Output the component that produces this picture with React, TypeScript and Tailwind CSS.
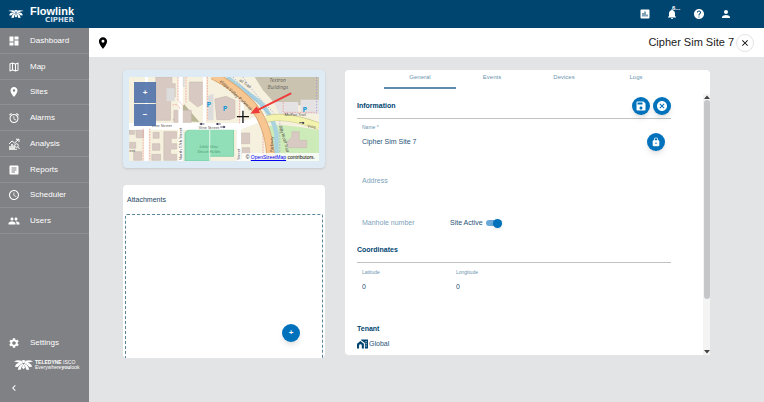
import type { ReactNode } from "react";
import {
  MdAlarm,
  MdArticle,
  MdAssessment,
  MdCancel,
  MdChevronLeft,
  MdClose,
  MdDashboard,
  MdHelp,
  MdLocationOn,
  MdLock,
  MdNotifications,
  MdOutlineMap,
  MdPeople,
  MdPerson,
  MdSave,
  MdSchedule,
  MdSettings,
} from "react-icons/md";

function TeledyneMark({ className }: { className: string }) {
  return (
    <svg viewBox="0 0 58 30" className={className} fill="currentColor" aria-hidden="true">
      <path d="M0 4 Q10 -1 22 2 L28 9 L22 11 Q12 5 0 4Z" />
      <path d="M58 4 Q48 -1 36 2 L30 9 L36 11 Q46 5 58 4Z" />
      <path d="M3 20 Q6 8 18 9 L26 11 Q16 14 11 21Z" />
      <path d="M55 20 Q52 8 40 9 L32 11 Q42 14 47 21Z" />
      <path d="M12 30 Q13 15 27 11 L28 14 Q21 20 21 29Z" />
      <path d="M46 30 Q45 15 31 11 L30 14 Q37 20 37 29Z" />
      <path d="M23 1 Q29 -1 35 1 L30 9 H28Z" />
      <path d="M29 12 L34 23 L29 28 L24 23Z" />
    </svg>
  );
}

function AnalysisIcon() {
  return (
    <svg viewBox="0 0 24 24" className="size-3" fill="none" stroke="currentColor" strokeWidth="2" aria-hidden="true">
      <path d="M2 12 L8 6 L13 10 L21 3 M16 2.500 H22 V8" />
      <path d="M4 22 V16 M8 22 V12 M12 22 V15" strokeWidth="3" />
      <circle cx="17" cy="15" r="3.500" />
      <path d="M19.500 18 L23 22 M2 22.500 H18" />
    </svg>
  );
}

function TenantIcon() {
  return (
    <svg viewBox="0 0 32 26" className="h-2.5 w-[11px] text-[#00456f]" fill="currentColor" aria-hidden="true">
      <path d="M0 12 L10 4 L20 12 V26 H14 V18 Q14 14 10 14 Q6 14 6 18 V26 H0Z" />
      <path d="M12 0 H32 V26 H23 V10 L12 2Z" />
      <path d="M25 5 h3 v3 h-3z M25 11 h3 v3 h-3z M25 17 h3 v3 h-3z" fill="#ffffff" />
    </svg>
  );
}

const navItems: { label: string; icon: ReactNode }[] = [
  { label: "Dashboard", icon: <MdDashboard className="size-3" /> },
  { label: "Map", icon: <MdOutlineMap className="size-3" /> },
  { label: "Sites", icon: <MdLocationOn className="size-3" /> },
  { label: "Alarms", icon: <MdAlarm className="size-3" /> },
  { label: "Analysis", icon: <AnalysisIcon /> },
  { label: "Reports", icon: <MdArticle className="size-3" /> },
  { label: "Scheduler", icon: <MdSchedule className="size-3" /> },
  { label: "Users", icon: <MdPeople className="size-3" /> },
];

function Header() {
  return (
    <header className="flex h-7 shrink-0 items-center justify-between bg-[#00456f] pr-8 pl-2 text-white">
      <div className="flex items-center gap-1.5">
        <TeledyneMark className="h-2 w-4" />
        <div className="flex flex-col items-end">
          <span className="text-[11px] leading-3 font-bold">Flowlink</span>
          <span className="font-['DejaVu_Sans',sans-serif] text-[7px] leading-[7px] font-bold text-[#cfdfe9]">CIPHER</span>
        </div>
      </div>
      <div className="flex items-center gap-[15px]">
        <button aria-label="Statistics">
          <MdAssessment className="size-3" />
        </button>
        <button aria-label="Notifications" className="relative">
          <MdNotifications className="size-3" />
          <span className="absolute -top-1 left-1.5 text-[6px] leading-2 font-bold">6...</span>
        </button>
        <button aria-label="Help">
          <MdHelp className="size-3" />
        </button>
        <button aria-label="Account">
          <MdPerson className="size-3" />
        </button>
      </div>
    </header>
  );
}

function Sidebar() {
  return (
    <nav className="flex w-[89px] shrink-0 flex-col bg-[#808184] text-[8px] text-white">
      <ul className="grid h-[206px] grid-rows-8">
        {navItems.map((item) => (
          <li key={item.label} className="flex border-b border-[#8f9093]">
            <a href="#" className="flex flex-1 items-center gap-2.5 pt-px pl-2">
              {item.icon}
              {item.label}
            </a>
          </li>
        ))}
      </ul>
      <a href="#" className="mt-auto flex h-[26px] items-center gap-2.5 pl-2">
        <MdSettings className="size-3" />
        Settings
      </a>
      <div className="flex h-[18px] items-center gap-0.5 pl-3.5">
        <TeledyneMark className="h-2.5 w-[19px]" />
        <div className="flex flex-col text-[5px] leading-[5px]">
          <span>
            <b>TELEDYNE</b> ISCO
          </span>
          <span>
            Everywhere<b>you</b>look
          </span>
        </div>
      </div>
      <button aria-label="Collapse menu" className="flex h-7 items-center pl-2">
        <MdChevronLeft className="size-3" />
      </button>
    </nav>
  );
}

function MapDrawing() {
  return (
    <svg viewBox="0 0 567 252" preserveAspectRatio="none" className="size-full" aria-hidden="true">
      <rect width="567" height="252" fill="#f5f1de" />
      {/* parkland and open ground */}
      <path d="M375 0 H567 V85 H440 L400 40Z" fill="#c9c3b0" />
      <path d="M395 160 Q410 130 567 160 V252 H430Z" fill="#cdebb8" />
      <path d="M130 130 L165 82 L210 135Z" fill="#b8b896" />
      <path d="M432 75 H505 V115 H450Z M512 68 H567 V110 H512Z" fill="#e4e2e2" />
      {/* buildings */}
      <g fill="#d8cac3" stroke="#c4b5ad" strokeWidth="1.500">
        <path d="M80 0 H128 V20 H138 V60 H124 V130 H80Z" />
        <path d="M180 15 H222 V80 L205 90 L180 70Z M134 100 H186 V136 H134Z" />
        <path d="M256 66 L290 58 L316 70 V122 L300 128 H262Z" />
        <path d="M0 160 H16 V172 H0Z M20 158 H44 V182 H22Z M2 196 H20 V214 H2Z M14 224 H38 V250 H14Z" />
        <path d="M72 166 H90 V184 H72Z M104 164 H142 V184 H126 V200 H142 V216 H124 V232 H142 V250 H104Z M70 200 H92 V220 H70Z M68 232 H94 V250 H68Z" />
        <path d="M335 168 H360 V200 H335Z M338 212 H360 V230 H338Z M470 196 L486 180 V164 H508 V190 H530 V212 H474Z" />
      </g>
      <path d="M112 34 H136 V72 H112Z M236 56 L252 50 V130 H236Z M150 0 H166 V30 H150Z" fill="#dcdcdc" />
      {/* sports fields */}
      <path d="M167 168 Q172 156 200 157 H312 V238 H241 V252 H167Z" fill="#90dfb8" stroke="#6cc79c" strokeWidth="2" />
      <path d="M241 160 V252" stroke="#e8f5ec" strokeWidth="3" />
      {/* minor streets */}
      <g fill="none" stroke="#ffffff">
        <path d="M0 148 H330 Q400 118 430 122" strokeWidth="20" />
        <path d="M52 146 V252 M154 0 V252 M328 150 V252" strokeWidth="13" />
        <path d="M52 0 V140 M225 0 V140 M338 50 V140" strokeWidth="9" />
      </g>
      <g fill="none" stroke="#f08f8f" strokeWidth="2" strokeDasharray="5 3">
        <path d="M42 155 V252 M62 155 V252 M146 0 V70 L166 90 M170 0 V76 M130 84 Q148 78 152 98" />
        <path d="M234 0 V130 M330 30 V140 M400 160 V252 M460 76 V106 H560 M440 240 H560" />
      </g>
      {/* creek and trail */}
      <path d="M292 0 Q330 30 390 75 Q432 120 440 170 V252" fill="none" stroke="#a8d3df" strokeWidth="13" />
      <path d="M340 0 Q370 45 415 90 L450 128 V252 M560 0 V110 M310 0 L425 118" fill="none" stroke="#8c8ce0" strokeWidth="2" strokeDasharray="4 5" />
      {/* main roads */}
      <path d="M410 126 Q470 110 567 148" fill="none" stroke="#c9c78f" strokeWidth="22" />
      <path d="M410 126 Q470 110 567 148" fill="none" stroke="#f4f3ae" strokeWidth="18" />
      <path d="M250 -5 Q320 30 372 90 Q420 150 424 256" fill="none" stroke="#d7a672" strokeWidth="25" />
      <path d="M250 -5 Q320 30 372 90 Q420 150 424 256" fill="none" stroke="#f8c791" strokeWidth="20" />
      {/* labels */}
      <g className="font-['Noto_Sans',sans-serif]" fill="#55504b" fontSize="12">
        <text x="67" y="150">Vine Street</text>
        <text x="208" y="156">Vine Street</text>
        <text x="1" y="226">eet</text>
        <text x="532" y="151" transform="rotate(8 532 151)">Vine</text>
        <text x="464" y="116">MoPac Trail</text>
        <text x="270" y="14" transform="rotate(43 270 14)" fontSize="13">elope Valley Parkway</text>
        <text x="158" y="250" transform="rotate(-90 158 250)">North 17th Street</text>
        <text x="332" y="248" transform="rotate(-90 332 248)">Street</text>
        <text x="430" y="226" transform="rotate(-90 430 226)">Parkway</text>
        <text x="448" y="146" transform="rotate(75 448 146)">Billy Wolff Trail</text>
        <text x="328" y="11" transform="rotate(36 328 11)">ail Trail</text>
      </g>
      <g className="font-['Noto_Sans',sans-serif]" fontStyle="italic" fontSize="15" textAnchor="middle">
        <text x="444" y="15" fill="#6f6b66">Textron</text>
        <text x="444" y="35" fill="#6f6b66">Buildings</text>
        <text x="238" y="213" fill="#4f9b6c" fontSize="13">Little Vine</text>
        <text x="238" y="229" fill="#4f9b6c" fontSize="13">Street Fields</text>
      </g>
      <g className="font-['Noto_Sans',sans-serif]" fill="#1d9ad6" fontSize="22" fontWeight="bold">
        <text x="231" y="90">P</text>
        <text x="280" y="103">P</text>
        <text x="518" y="106">P</text>
      </g>
      <path d="M211 141 H225 M260 141 H274 M272 150 H286 M508 137 H522" stroke="#1c1a3a" strokeWidth="2" />
      <path d="M211 141 l6 -4 v8z M260 141 l6 -4 v8z M288 150 l-6 -4 v8z M524 138 l-6 -4 v8z" fill="#1c1a3a" />
      {/* site position and the pointer to it */}
      <path d="M340 101 V138 M322 119 H358" stroke="#111111" strokeWidth="4" />
      <path d="M482 50 L380 101" stroke="#ee3b3b" strokeWidth="6" strokeLinecap="round" />
      <path d="M362 110 L381 88 L391 108Z" fill="#ee3b3b" />
    </svg>
  );
}

function MapCard() {
  return (
    <section className="h-[98px] rounded-sm bg-[#deebf5] px-1.5 py-[7px] shadow-sm">
      <div className="relative h-full overflow-hidden">
        <MapDrawing />
        <div className="absolute top-[5px] left-[5px] flex flex-col gap-px text-[8px] font-bold text-white">
          <button aria-label="Zoom in" className="h-[21px] w-[22px] bg-[#4468a6]/85">
            +
          </button>
          <button aria-label="Zoom out" className="h-[22px] w-[22px] bg-[#4468a6]/85">
            −
          </button>
        </div>
        <p className="absolute right-0 bottom-0 bg-white/80 px-1 text-[5px] leading-2 whitespace-nowrap text-black">
          ©{" "}
          <a href="#" className="text-[#0000ee] underline">
            OpenStreetMap
          </a>{" "}
          contributors.
        </p>
      </div>
    </section>
  );
}

function Attachments() {
  return (
    <section className="flex h-[173px] flex-col rounded-sm bg-white px-0.5">
      <h2 className="px-0.5 pt-2.5 pb-[9px] text-[7px] leading-[10px] text-[#1c4664]">Attachments</h2>
      <div className="flex flex-1 items-end justify-end rounded-t-xs border border-b-0 border-dashed border-[#5b8599] pr-[22px] pb-4">
        <button
          aria-label="Add attachment"
          className="flex size-[18px] items-center justify-center rounded-full bg-[#0072bc] text-[8px] leading-none font-bold text-white shadow-md"
        >
          +
        </button>
      </div>
    </section>
  );
}

function RoundButton({ label, children }: { label: string; children: ReactNode }) {
  return (
    <button
      aria-label={label}
      className="flex size-[18px] items-center justify-center rounded-full bg-[#0072bc] text-white shadow-md"
    >
      {children}
    </button>
  );
}

function Field({ id, label, value }: { id: string; label: string; value: string }) {
  return (
    <div className="flex flex-col gap-[7px]">
      <label htmlFor={id} className="text-[5px] leading-[6px] text-[#6c95b0]">
        {label}
      </label>
      <input id={id} defaultValue={value} className="h-2.5 w-full outline-none" />
    </div>
  );
}

const tabs = ["General", "Events", "Devices", "Logs"];

function SitePanel() {
  return (
    <section className="flex h-[285px] min-w-0 flex-1 flex-col rounded-sm bg-white">
      <div role="tablist" className="flex h-6 pl-[39px] text-[6px] text-[#6c95b0]">
        {tabs.map((tab) => (
          <button
            key={tab}
            role="tab"
            aria-selected={tab === "General"}
            className="h-[19px] w-[72px] border-b-2 border-transparent pb-0.5 aria-selected:border-[#5f8cad]"
          >
            {tab}
          </button>
        ))}
      </div>
      <div className="flex min-h-0 flex-1">
        <div className="min-w-0 flex-1 overflow-hidden pr-8 pl-3 text-[7px] text-[#1f5478]">
          <div className="flex h-[25px] items-center justify-between border-b border-[#bfc1c3]">
            <h2 className="font-bold text-[#00456f]">Information</h2>
            <div className="flex gap-[3px]">
              <RoundButton label="Save">
                <MdSave className="size-3" />
              </RoundButton>
              <RoundButton label="Cancel">
                <MdCancel className="size-3" />
              </RoundButton>
            </div>
          </div>

          <div className="flex items-end justify-between pt-[5px] pr-1.5 pl-[5px]">
            <div className="flex-1 pb-1">
              <Field id="name" label="Name *" value="Cipher Sim Site 7" />
            </div>
            <RoundButton label="Unlock site">
              <MdLock className="size-2.5" />
            </RoundButton>
          </div>

          <div className="pt-[25px] pl-[5px]">
            <input
              aria-label="Address"
              placeholder="Address"
              className="block h-2.5 w-full outline-none placeholder:text-[#7da2ba]"
            />
          </div>

          <div className="flex items-center pt-8 pl-[5px]">
            <input
              aria-label="Manhole number"
              placeholder="Manhole number"
              className="block h-2.5 w-[88px] outline-none placeholder:text-[#7da2ba]"
            />
            <label className="flex h-2.5 items-center gap-[3px]">
              Site Active
              <input
                type="checkbox"
                role="switch"
                defaultChecked
                className="flex h-1.5 w-4 appearance-none items-center justify-end rounded-full bg-[#6aa9d8] before:size-[9px] before:rounded-full before:bg-[#0072bc] before:shadow"
              />
            </label>
          </div>

          <h2 className="flex h-[35px] items-end border-b border-[#bfc1c3] pb-[7px] leading-[10px] font-bold text-[#00456f]">
            Coordinates
          </h2>
          <div className="flex pt-1.5 pl-[5px]">
            <div className="w-[94px]">
              <Field id="latitude" label="Latitude" value="0" />
            </div>
            <div className="w-[94px]">
              <Field id="longitude" label="Longitude" value="0" />
            </div>
          </div>

          <h2 className="pt-8 leading-[10px] font-bold text-[#00456f]">Tenant</h2>
          <p className="flex items-center gap-px pt-[5px]">
            <TenantIcon />
            Global
          </p>
        </div>

        <div aria-hidden="true" className="flex w-[7px] flex-col items-center bg-[#f4f4f5]">
          <svg viewBox="0 0 6 6" className="size-1.5 shrink-0">
            <path d="M0 5 L3 1.500 L6 5Z" fill="#444444" />
          </svg>
          <div className="w-1.5 flex-4 rounded-full bg-[#c4c6c8]" />
          <div className="w-full flex-1" />
          <svg viewBox="0 0 6 6" className="size-1.5 shrink-0">
            <path d="M0 1 L3 4.500 L6 1Z" fill="#444444" />
          </svg>
        </div>
      </div>
    </section>
  );
}

export default function App() {
  return (
    <div className="flex min-h-screen flex-col bg-[#e3e4e6] font-['Liberation_Sans',Arial,sans-serif]">
      <Header />
      <div className="flex flex-1">
        <Sidebar />
        <main className="flex min-w-0 flex-1 flex-col">
          <div className="flex h-[29px] items-center justify-between bg-white pr-2.5 pl-[7px]">
            <MdLocationOn className="size-3.5 text-black" />
            <div className="flex items-center gap-0.5">
              <h1 className="text-[11px] text-[#1a1a1a]">Cipher Sim Site 7</h1>
              <button
                aria-label="Close"
                className="flex size-[18px] items-center justify-center rounded-full border border-[#e3e4e6] text-black"
              >
                <MdClose className="size-2.5" />
              </button>
            </div>
          </div>
          <div className="flex items-start gap-5 pt-[13px] pr-[54px] pl-[34px]">
            <div className="flex w-[202px] shrink-0 flex-col gap-[17px]">
              <MapCard />
              <Attachments />
            </div>
            <SitePanel />
          </div>
        </main>
      </div>
    </div>
  );
}
